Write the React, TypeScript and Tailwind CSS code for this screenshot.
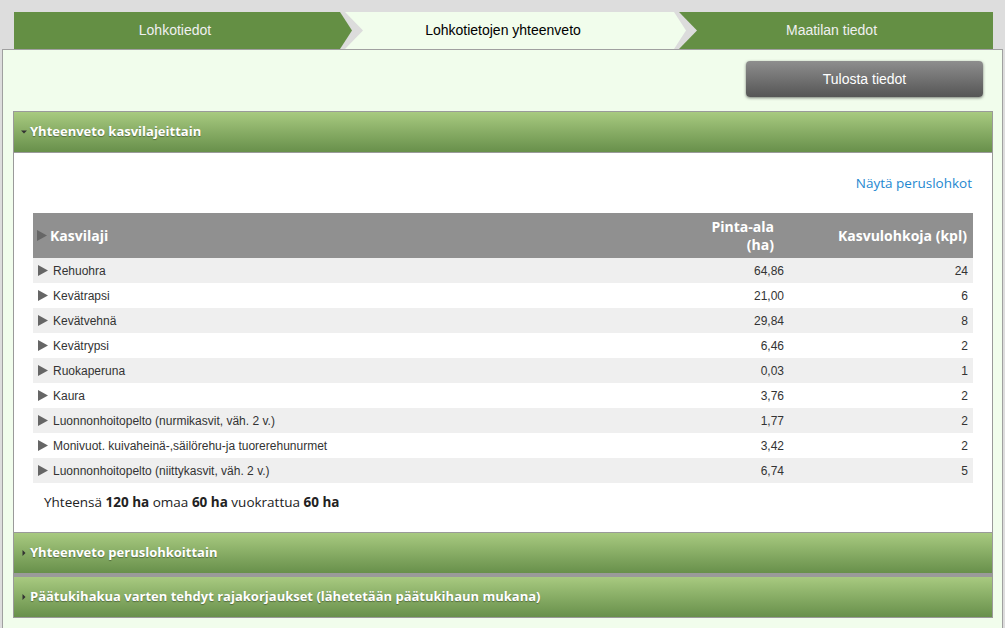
import React from 'react';

const rows: [string, string, string][] = [
  ['Rehuohra', '64,86', '24'],
  ['Kevätrapsi', '21,00', '6'],
  ['Kevätvehnä', '29,84', '8'],
  ['Kevätrypsi', '6,46', '2'],
  ['Ruokaperuna', '0,03', '1'],
  ['Kaura', '3,76', '2'],
  ['Luonnonhoitopelto (nurmikasvit, väh. 2 v.)', '1,77', '2'],
  ['Monivuot. kuivaheinä-,säilörehu-ja tuorerehunurmet', '3,42', '2'],
  ['Luonnonhoitopelto (niittykasvit, väh. 2 v.)', '6,74', '5'],
];

const headFont = "font-['Open_Sans','DejaVu_Sans',sans-serif]";

function Chevron({ left, right }: { left: string; right: string }) {
  return (
    <svg className="absolute left-0 top-0 h-[37px] w-[28px]" viewBox="0 0 28 37" preserveAspectRatio="none">
      <rect x="0" y="0" width="28" height="37" fill={right} />
      <polygon points="0,0 9,0 27,18.5 9,37 0,37" fill="#dcdcdc" />
      <polygon points="0,0 4,0 16,18.5 4,37 0,37" fill={left} />
    </svg>
  );
}

function Arrow({ className = '' }: { className?: string }) {
  return (
    <svg className={`h-[11px] w-[10px] shrink-0 ${className}`} viewBox="0 0 10 11">
      <polygon points="0,0 10,5.5 0,11" fill="#666" />
    </svg>
  );
}

function SectionHeader({ title, open = false }: { title: string; open?: boolean }) {
  return (
    <div className="flex h-[42px] items-center gap-[3px] border border-[#9a9a9a] bg-gradient-to-b from-[#a8ca80] to-[#68904b] pl-[7px]">
      <svg className="h-[6px] w-[6px]" viewBox="0 0 6 6">
        {open ? <polygon points="0,1.5 6,1.5 3,4.5" fill="#333" /> : <polygon points="1.5,0 4.5,3 1.5,6" fill="#333" />}
      </svg>
      <span className={`${headFont} text-[13px] font-bold text-white [text-shadow:0_1px_1px_rgba(0,0,0,0.35)]`}>
        {title}
      </span>
    </div>
  );
}

export default function App() {
  return (
    <div className="h-[628px] w-[1005px] overflow-hidden bg-[#dddddd] font-['Liberation_Sans',Arial,sans-serif]">
      {/* Wizard tabs */}
      <div className="flex h-[49px] pl-[14px] pt-[12px]">
        <div className="flex h-[37px] w-[322px] items-center justify-center bg-[#648f44] text-[14px] text-[#f0f0f0]">
          Lohkotiedot
        </div>
        <div className="relative flex h-[37px] w-[334px] items-center justify-center bg-[#f1fdec] text-[14px] text-black">
          <Chevron left="#648f44" right="#f1fdec" />
          <span className="relative">Lohkotietojen yhteenveto</span>
        </div>
        <div className="relative flex h-[37px] w-[323px] items-center justify-center bg-[#648f44] text-[14px] text-[#f0f0f0]">
          <Chevron left="#f1fdec" right="#648f44" />
          <span className="relative">Maatilan tiedot</span>
        </div>
      </div>

      {/* Main panel */}
      <div className="relative mx-[2px] h-[600px] border border-b-0 border-[#a0a0a0] bg-[#f1fdec] pl-[10px] pr-[9px]">
        <div className="flex justify-end pr-[10px] pt-[11px] pb-[14px]">
          <button className="h-[36px] w-[237px] rounded-[4px] bg-gradient-to-b from-[#8e8e8e] to-[#565656] text-[14px] text-white shadow-[0_1px_3px_rgba(0,0,0,0.5)]">
            Tulosta tiedot
          </button>
        </div>

        <SectionHeader title="Yhteenveto kasvilajeittain" open />
        <div className="h-[379px] border-x border-[#9a9a9a] bg-white px-[19px] pt-[20px]">
          <div className={`${headFont} flex justify-end pr-[1px] text-[13.5px] text-[#1e88d0]`}>Näytä peruslohkot</div>

          <table className="mt-[20px] w-full border-collapse text-[12px] text-[#333]">
            <thead>
              <tr className={`${headFont} h-[45px] bg-[#909090] text-[14px] font-bold text-white`}>
                <th className="pl-[4px] text-left">
                  <div className="flex items-center gap-[3px]">
                    <Arrow />
                    <span>Kasvilaji</span>
                  </div>
                </th>
                <th className="w-[150px] pr-[11px] text-right leading-[18px]">
                  Pinta-ala
                  <br />
                  (ha)
                </th>
                <th className="w-[188px] pr-[6px] text-right">Kasvulohkoja (kpl)</th>
              </tr>
            </thead>
            <tbody>
              {rows.map(([name, area, count], i) => (
                <tr key={name} className={`h-[25px] ${i % 2 === 0 ? 'bg-[#efefef]' : 'bg-white'}`}>
                  <td className="pl-[5px]">
                    <div className="flex items-center gap-[5px]">
                      <Arrow />
                      <span>{name}</span>
                    </div>
                  </td>
                  <td className="pr-[1px] text-right">{area}</td>
                  <td className="pr-[5px] text-right">{count}</td>
                </tr>
              ))}
            </tbody>
          </table>

          <div className={`${headFont} mt-[9px] pl-[11px] text-[13.5px] text-[#222]`}>
            Yhteensä <b>120 ha</b> omaa <b>60 ha</b> vuokrattua <b>60 ha</b>
          </div>
        </div>

        <SectionHeader title="Yhteenveto peruslohkoittain" />
        <div className="h-[2px] bg-[#9a9a9a]" />
        <SectionHeader title="Päätukihakua varten tehdyt rajakorjaukset (lähetetään päätukihaun mukana)" />
      </div>
    </div>
  );
}
